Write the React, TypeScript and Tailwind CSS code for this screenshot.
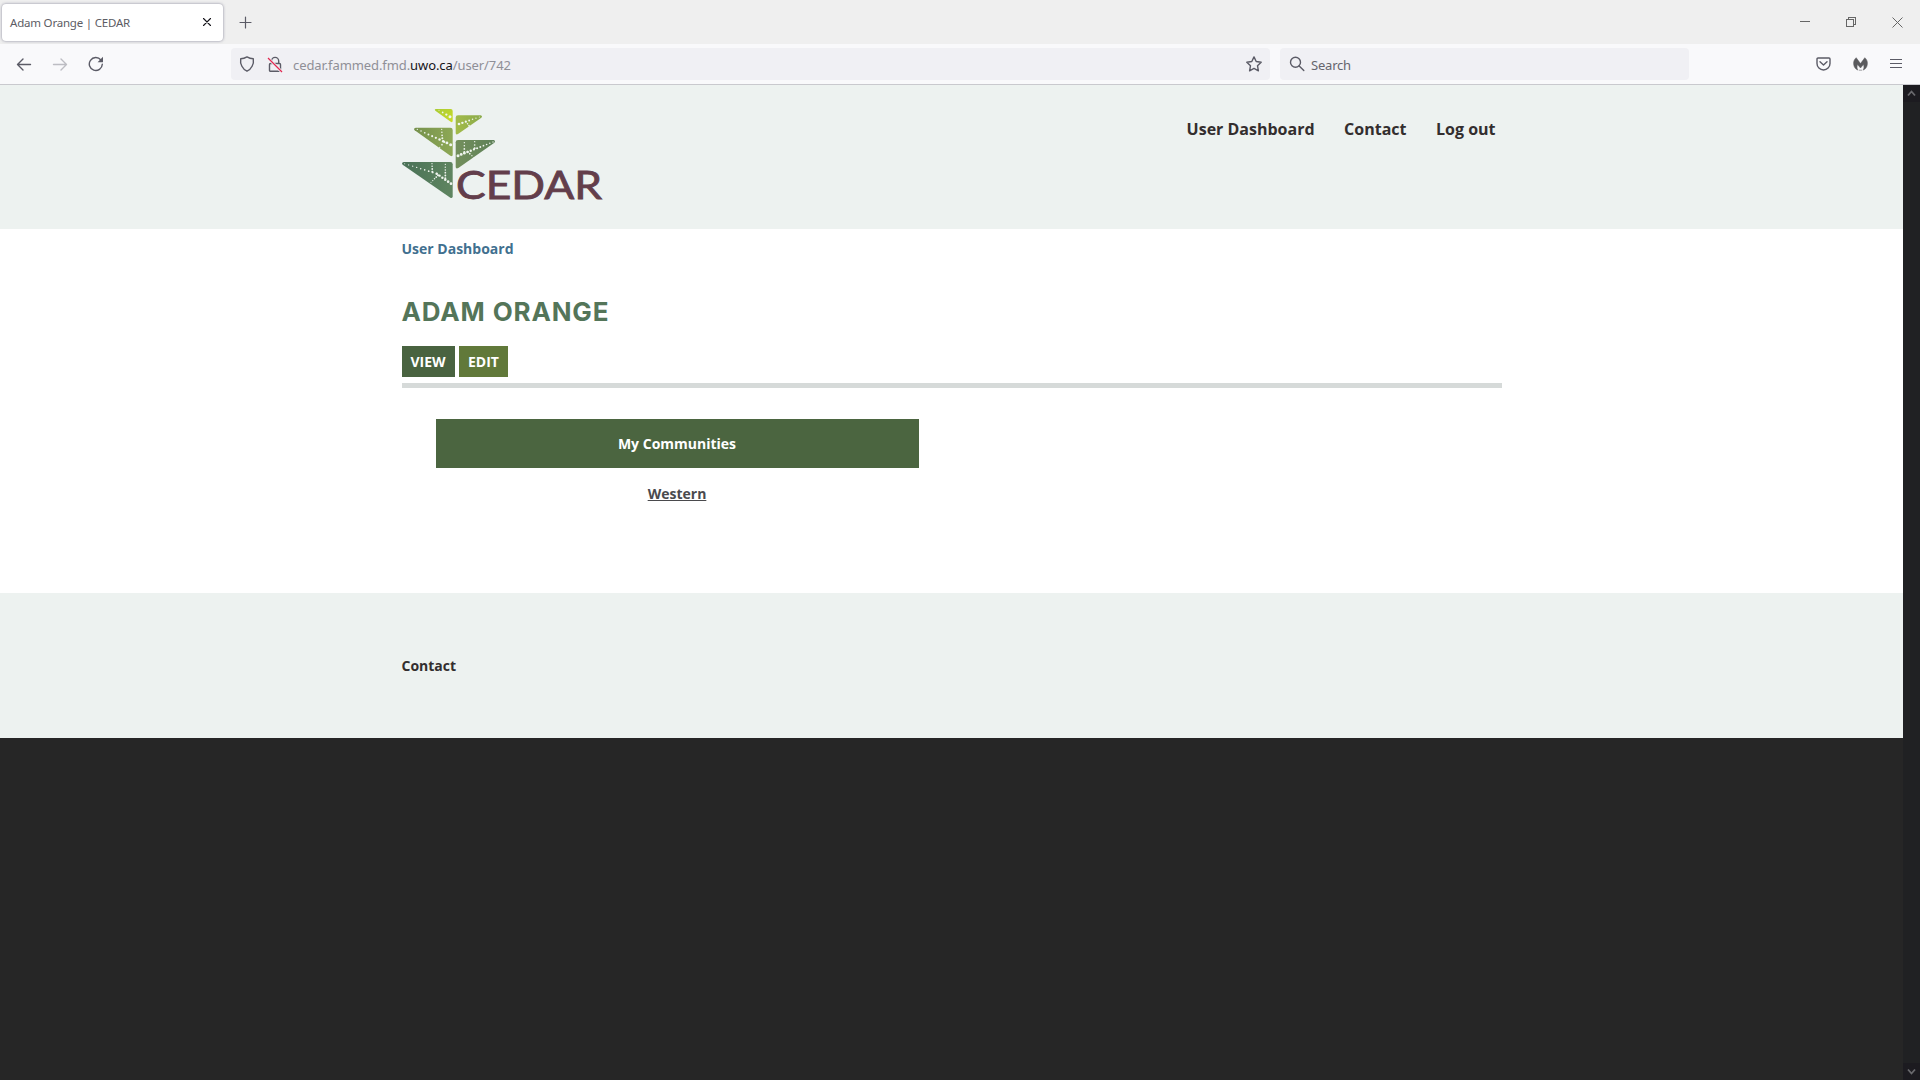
const stroke = { fill: "none", stroke: "#5b5b66", strokeWidth: 1.4, strokeLinecap: "round", strokeLinejoin: "round" } as const;

function TabStrip() {
  return (
    <div className="flex h-[44px] items-center bg-[#efefef]">
      <div className="ml-[2px] flex h-[37px] w-[221px] items-center justify-between rounded-[4px] bg-white pl-[8px] pr-[11px] shadow-[0_0_3px_rgba(100,100,125,0.75)]">
        <span className="mt-[2px] whitespace-nowrap text-[11.5px] leading-[16px] tracking-[-0.2px] text-[#5c5c64]">Adam Orange | CEDAR</span>
        <svg width="10" height="10" viewBox="0 0 10 10"><path d="M1.5 1.5l7 7M8.5 1.5l-7 7" stroke="#15141a" strokeWidth="1.1" strokeLinecap="round" /></svg>
      </div>
      <svg className="ml-[16px]" width="13" height="13" viewBox="0 0 13 13"><path d="M6.500 1v11M1 6.500h11" {...stroke} strokeWidth={1.2} /></svg>
      <div className="ml-auto mr-[17px] flex items-center gap-[36px]">
        <svg width="10" height="10" viewBox="0 0 10 10" shapeRendering="crispEdges"><path d="M0 4.5h10" stroke="#666" /></svg>
        <svg width="10" height="10" viewBox="0 0 10 10" fill="none" stroke="#666" shapeRendering="crispEdges"><path d="M.5 2.5h7v7h-7zM2.5 2.5v-2h7v7h-2" /></svg>
        <svg width="11" height="11" viewBox="0 0 11 11"><path d="M.5.5l10 10M10.5.5l-10 10" stroke="#666" strokeWidth="1" /></svg>
      </div>
    </div>
  );
}

function Toolbar() {
  return (
    <div className="flex h-[41px] items-center border-b border-[#c9c9ce] bg-[#f9f9fb]">
      <svg className="ml-[16px]" width="16" height="16" viewBox="0 0 16 16"><path d="M7 3L1.5 8.5 7 14M1.5 8.5h13" {...stroke} /></svg>
      <svg className="ml-[20px]" width="16" height="16" viewBox="0 0 16 16"><path d="M9 3l5.500 5.500L9 14M14.500 8.500h-13" {...stroke} stroke="#bdbdc3" /></svg>
      <svg className="ml-[20px]" width="16" height="16" viewBox="0 0 16 16"><path d="M12.900 4A6.500 6.500 0 1 0 14.300 8.300" {...stroke} /><path d="M15 .8v5.400H9.600z" fill="#5b5b66" /></svg>
      <div className="ml-[127px] flex h-[32px] w-[1039px] items-center rounded-[4px] bg-[#f0f0f4]">
        <svg className="ml-[8px]" width="16" height="16" viewBox="0 0 16 16"><path d="M8 .9c2 1.200 4.300 1.800 6.300 1.900C15.200 8 12.300 13.400 8 15.200 3.700 13.400.8 8 1.700 2.800 3.700 2.700 6 2.100 8 .9z" {...stroke} /></svg>
        <svg className="ml-[12px]" width="16" height="17" viewBox="0 0 16 17"><path d="M4.500 7.500V5a3.600 3.600 0 0 1 7.200 0v2.500M3.500 7.500h9a1 1 0 0 1 1 1v5.700a1 1 0 0 1-1 1h-9a1 1 0 0 1-1-1V8.500a1 1 0 0 1 1-1z" {...stroke} /><path d="M1.200 2.200l13.500 13.500" stroke="#f0f0f4" strokeWidth="3" /><path d="M1 2l14 14" stroke="#e22850" strokeWidth="1.300" /></svg>
        <span className="ml-[10px] mt-[2px] whitespace-nowrap text-[13px] leading-[20px] tracking-[-0.09px] text-[#8f8f97]">cedar.fammed.fmd.<span className="text-[#15141a]">uwo.ca</span>/user/742</span>
        <svg className="ml-auto mr-[8px]" width="16" height="16" viewBox="0 0 16 16"><path d="M8 .9l2.200 4.600 5 .7-3.700 3.500.9 5.100L8 12.400l-4.400 2.400.9-5.100L.8 6.200l5-.7z" {...stroke} /></svg>
      </div>
      <div className="ml-[10px] flex h-[32px] w-[409px] items-center rounded-[4px] bg-[#f0f0f4]">
        <svg className="ml-[9px]" width="16" height="16" viewBox="0 0 16 16"><circle cx="6.500" cy="6.300" r="5" {...stroke} /><path d="M10.200 10l4.600 4.600" {...stroke} /></svg>
        <span className="ml-[6px] mt-[2px] text-[13px] leading-[20px] tracking-[-0.2px] text-[#65656d]">Search</span>
      </div>
      <div className="ml-auto mr-[18px] flex items-center gap-[22px]">
        <svg width="15" height="14" viewBox="0 0 15 14"><path d="M2 1h11a1 1 0 0 1 1 1v4.500a6.500 6.500 0 0 1-13 0V2a1 1 0 0 1 1-1zM4 4.800l3.500 3.300L11 4.800" {...stroke} /></svg>
        <svg width="15" height="14" viewBox="0 0 15 14"><path d="M3.200.7L7.500 6.600 11.800.7C14 2.500 14.800 5 14.300 7.700c-.4 2.500-1.900 4.600-4.100 5.400.9-1.700 1-3.700.3-5.600L7.500 11 4.500 7.500c-.7 1.900-.6 3.900.3 5.600C2.600 12.300 1.100 10.200.7 7.700.2 5 1 2.500 3.200.7z" fill="#5b5b5e" stroke="#5b5b5e" strokeWidth=".5" /><path d="M5.800 13.200h3.400" stroke="#8a8a8e" strokeWidth=".8" /></svg>
        <svg width="12" height="12" viewBox="0 0 12 12"><path d="M.5 1.500h11M.5 5.500h11M.5 9.500h11" {...stroke} strokeWidth={1.200} /></svg>
      </div>
    </div>
  );
}

type Dot = [number, number, number];

function dotRow(x1: number, y1: number, x2: number, y2: number, n: number, r1: number, r2: number): Dot[] {
  return Array.from({ length: n }, (_, i) => {
    const t = i / (n - 1);
    return [x1 + (x2 - x1) * t, y1 + (y2 - y1) * t, r1 + (r2 - r1) * t];
  });
}

const dots: Dot[] = [
  ...dotRow(147, 46, 180, 65, 4, 1.5, 4.500),
  ...dotRow(268, 66, 207, 87, 7, 1.5, 4),
  ...dotRow(228, 80, 237, 92, 3, 2, 2.500),
  ...dotRow(82, 103, 182, 149, 10, 2, 4.500),
  ...dotRow(155, 103, 157, 130, 4, 2, 3),
  ...dotRow(163, 141, 149, 157, 3, 3, 2),
  ...dotRow(309, 141, 204, 182, 12, 2, 4.500),
  ...dotRow(223, 143, 223, 171, 4, 2, 3),
  ...dotRow(254, 140, 254, 160, 3, 2, 3),
  ...dotRow(233, 170, 252, 188, 4, 3, 1.500),
  ...dotRow(44, 206, 140, 236, 9, 1.500, 3),
  ...dotRow(140, 236, 183, 266, 6, 3.500, 4),
  ...dotRow(126, 206, 127, 230, 4, 2, 3),
  ...dotRow(166, 208, 166, 250, 6, 2, 3),
  ...dotRow(144, 241, 123, 262, 5, 3, 1.500),
];

function Logo() {
  return (
    <svg className="overflow-visible" width="240" height="110" viewBox="36 36 720 330" role="img" aria-label="CEDAR">
      <defs>
        <linearGradient id="g1" x1="0" y1="0" x2="1" y2="1"><stop stopColor="#a9cb35" /><stop offset="1" stopColor="#cbdc25" /></linearGradient>
        <linearGradient id="g2" x1="0" y1="0" x2="1" y2="0"><stop stopColor="#a3bb49" /><stop offset="1" stopColor="#8bab4b" /></linearGradient>
        <linearGradient id="g3" x1="0" y1="0" x2="1" y2="0"><stop stopColor="#76914d" /><stop offset="1" stopColor="#8da855" /></linearGradient>
        <linearGradient id="g4" x1="0" y1="0" x2="1" y2="0"><stop stopColor="#738f5c" /><stop offset="1" stopColor="#5d8058" /></linearGradient>
        <linearGradient id="g5" x1="0" y1="0" x2="1" y2="0"><stop stopColor="#497157" /><stop offset="1" stopColor="#5f8560" /></linearGradient>
      </defs>
      <path d="M137 42h45q6 0 6 6v29q0 7-6 3l-46-33q-4-4 1-5z" fill="url(#g1)" />
      <path d="M204 61h68q7 2 2 7l-70 49q-7 4-7-4V68q0-7 7-7z" fill="url(#g2)" />
      <path d="M77 98h104q7 0 7 7v74q0 7-7 3L74 106q-5-6 3-8z" fill="url(#g3)" />
      <path d="M204 135h107q7 2 2 8L205 219q-8 4-8-4v-73q0-7 7-7z" fill="url(#g4)" />
      <path d="M41 201h140q7 0 7 7v96q0 7-7 4L38 209q-5-6 3-8z" fill="url(#g5)" />
      {dots.map(([x, y, r], i) => <circle key={i} cx={x} cy={y} r={r} fill="#f0f5ef" />)}
      <text x="198" y="312" textLength="438" lengthAdjust="spacingAndGlyphs" fill="#633e4b" stroke="#633e4b" strokeWidth="2.5" className="font-['Lato',sans-serif] text-[118px] font-normal">CEDAR</text>
    </svg>
  );
}

function Site() {
  return (
    <div className="w-[1903px] font-['Open_Sans',sans-serif] font-bold">
      <header className="h-[144px] bg-[#edf2f0]">
        <div className="mx-auto flex w-[1100px] items-start justify-between pt-[22px]">
          <Logo />
          <nav className="mr-[6px] mt-[11px] flex gap-[29.5px] text-[16px] leading-[22px] text-[#332e2e]">
            <a>User Dashboard</a><a>Contact</a><a>Log out</a>
          </nav>
        </div>
      </header>
      <main className="h-[364px] bg-white">
        <div className="mx-auto w-[1100px] pt-[10px]">
          <a className="block text-[14px] leading-[20px] text-[#41708f]">User Dashboard</a>
          <h1 className="mt-[37px] font-['Inter',sans-serif] text-[26px] font-bold leading-[32px] tracking-[0.85px] text-[#547559]">ADAM ORANGE</h1>
          <div className="mt-[18px] flex gap-[4px] text-[14px] leading-[31px] text-white">
            <span className="h-[31px] w-[53px] bg-[#496340] text-center">VIEW</span>
            <span className="h-[31px] w-[49px] bg-[#61793a] pl-px text-center">EDIT</span>
          </div>
          <div className="mt-[6px] h-[5px] bg-[#d6dad9]" />
          <section className="ml-[34px] mt-[31px] w-[483px] text-center text-[14px]">
            <h2 className="h-[49px] bg-[#4b6540] leading-[49px] text-white">My Communities</h2>
            <a className="mt-[16px] block leading-[20px] text-[#4a4a4d] underline">Western</a>
          </section>
        </div>
      </main>
      <footer className="h-[145px] bg-[#edf2f0]">
        <div className="mx-auto w-[1100px] pt-[63px] text-[14px] leading-[20px] text-[#332e2e]">Contact</div>
      </footer>
    </div>
  );
}

function Scrollbar() {
  return (
    <div className="flex w-[17px] flex-col justify-between bg-[#202123]">
      <div className="flex h-[17px] items-center justify-center bg-[#1c1b20]"><svg width="9" height="7" viewBox="0 0 9 7"><path d="M1 5.500l3.500-4 3.500 4" fill="none" stroke="#69696d" strokeWidth="1.800" /></svg></div>
      <div className="flex h-[17px] items-center justify-center bg-[#1c1b20]"><svg width="9" height="7" viewBox="0 0 9 7"><path d="M1 1.500l3.500 4 3.500-4" fill="none" stroke="#69696d" strokeWidth="1.800" /></svg></div>
    </div>
  );
}

export default function App() {
  return (
    <div className="flex h-[1080px] w-[1920px] flex-col overflow-hidden bg-[#262626] font-['Noto_Sans',sans-serif]">
      <TabStrip />
      <Toolbar />
      <div className="flex flex-1 items-stretch"><Site /><Scrollbar /></div>
    </div>
  );
}
